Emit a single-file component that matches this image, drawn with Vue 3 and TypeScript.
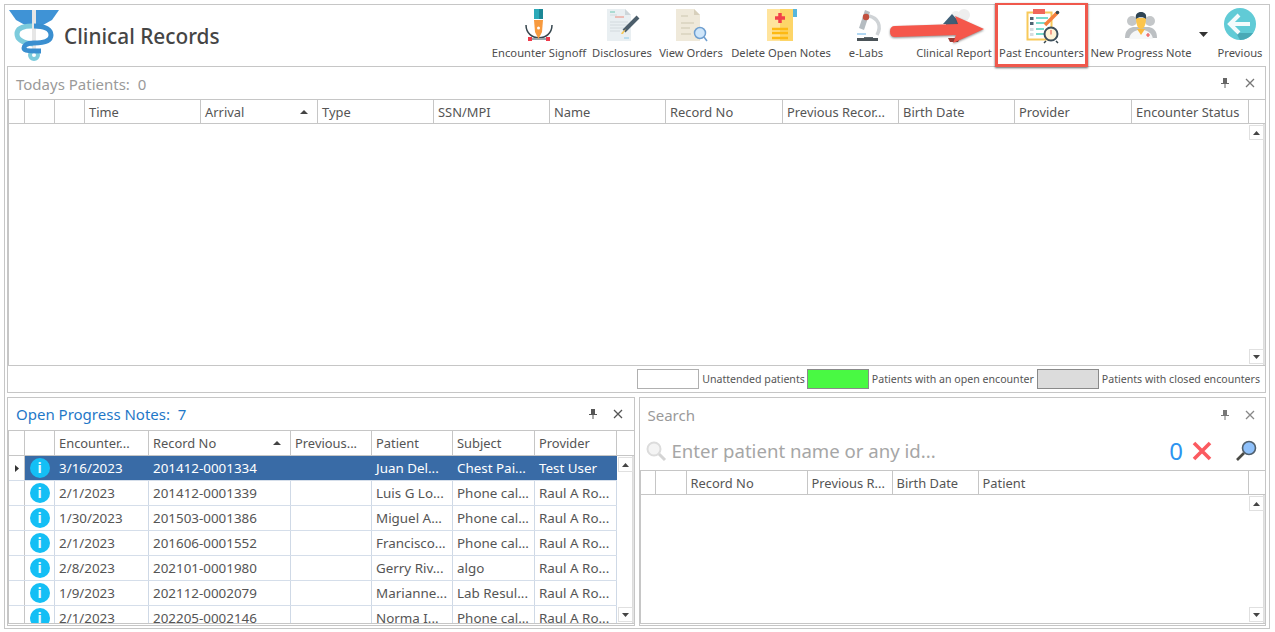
<script setup lang="ts">
const topCols: string[] = ['', '', '', 'Time', 'Arrival', 'Type', 'SSN/MPI', 'Name', 'Record No', 'Previous Recor...', 'Birth Date', 'Provider', 'Encounter Status', '']
const noteCols: string[] = ['', '', 'Encounter...', 'Record No', 'Previous...', 'Patient', 'Subject', 'Provider', '']
const searchCols: string[] = ['', '', 'Record No', 'Previous R...', 'Birth Date', 'Patient', '']

interface Note { date: string; rec: string; patient: string; subject: string; provider: string }
const notes: Note[] = [
  { date: '3/16/2023', rec: '201412-0001334', patient: 'Juan Del...', subject: 'Chest Pai...', provider: 'Test User' },
  { date: '2/1/2023', rec: '201412-0001339', patient: 'Luis G Lo...', subject: 'Phone cal...', provider: 'Raul A Ro...' },
  { date: '1/30/2023', rec: '201503-0001386', patient: 'Miguel A...', subject: 'Phone cal...', provider: 'Raul A Ro...' },
  { date: '2/1/2023', rec: '201606-0001552', patient: 'Francisco...', subject: 'Phone cal...', provider: 'Raul A Ro...' },
  { date: '2/8/2023', rec: '202101-0001980', patient: 'Gerry Riv...', subject: 'algo', provider: 'Raul A Ro...' },
  { date: '1/9/2023', rec: '202112-0002079', patient: 'Marianne...', subject: 'Lab Resul...', provider: 'Raul A Ro...' },
  { date: '2/1/2023', rec: '202205-0002146', patient: 'Norma I...', subject: 'Phone cal...', provider: 'Raul A Ro...' },
]
</script>

<template>
  <div class="page">
    <div class="frame">
      <header class="toolbar">
        <div class="brand">
          <svg class="logo" width="56" height="56" viewBox="0 0 56 56">
            <path d="M4 5 H27 V20 H20 L11 15Z" fill="#3f93d6" />
            <path d="M31 5 H54 L47 15 L38 20 H31Z" fill="#3f93d6" />
            <rect x="27" y="5" width="4" height="42" fill="#e6e6e6" />
            <path d="M27 21 C17 21 12 24 12 29 C12 35 20 38 28 39" fill="none" stroke="#7ccbdc" stroke-width="5" />
            <circle cx="29" cy="50" r="4" fill="none" stroke="#7ccbdc" stroke-width="4" />
            <path d="M29 21 C41 21 46 25 46 30 C46 37 35 38 29 38 C21 38 19 41 19 43 C19 46 26 46 36 46" fill="none" stroke="#3a8fd0" stroke-width="5" />
          </svg>
          <span class="app-title">Clinical Records</span>
        </div>
        <div class="tools">
          <div class="tool w100">
            <svg width="40" height="36" viewBox="0 0 40 36">
              <path d="M7 17 C7 34 33 34 33 17" fill="none" stroke="#37474f" stroke-width="1.5" />
              <rect x="13" y="30" width="14" height="2" fill="#9aa5aa" />
              <rect x="9" y="29" width="4" height="4" fill="#f03a4a" /><rect x="27" y="29" width="4" height="4" fill="#f03a4a" />
              <rect x="15" y="1" width="9" height="10" fill="#2ba9b8" /><rect x="20" y="1" width="4" height="10" fill="#1b8796" />
              <path d="M15 12 H24 L23 24 L19.5 31 L16 24Z" fill="#f79a3e" />
              <circle cx="19.5" cy="20" r="1.5" fill="#fff" />
            </svg>
            <span>Encounter Signoff</span>
          </div>
          <div class="tool w66">
            <svg width="40" height="36" viewBox="0 0 40 36">
              <path d="M5 1 H23 L29 7 V33 H5Z" fill="#e9eff2" /><path d="M23 1 L29 7 H23Z" fill="#cdd6da" />
              <path d="M8 4 H13" stroke="#6fc8b4" /><path d="M8 7 H15 M8 14 H26 M8 17 H26 M8 20 H22 M8 23 H18" stroke="#d3dade" />
              <path d="M13 9 H22" stroke="#ee8a7a" /><path d="M22 30 H27" stroke="#8ccbea" />
              <path d="M36 9 L22 23" stroke="#4c5e6b" stroke-width="4" /><path d="M24 21 L21 26 L19 26 L20 24Z" fill="#f7c95c" />
            </svg>
            <span>Disclosures</span>
          </div>
          <div class="tool w72">
            <svg width="40" height="36" viewBox="0 0 40 36">
              <path d="M5 1 H23 L29 7 V33 H5Z" fill="#efe9da" /><path d="M23 1 L29 7 H23Z" fill="#d8d0bc" />
              <path d="M10 8 H17 M10 15 H23 M10 20 H19 M10 26 H20" stroke="#d9d2bf" stroke-width="1.5" />
              <circle cx="29" cy="25" r="5.5" fill="#cfe6fa" stroke="#6f9fd0" stroke-width="1.5" /><path d="M33 29 L36 33" stroke="#6f9fd0" stroke-width="1.5" />
            </svg>
            <span>View Orders</span>
          </div>
          <div class="tool w108">
            <svg width="40" height="36" viewBox="0 0 40 36">
              <rect x="32" y="1" width="4" height="8" fill="#58b6dc" />
              <rect x="6" y="1" width="26" height="32" fill="#fdd568" /><rect x="6" y="1" width="13" height="32" fill="#ffe49d" />
              <path d="M19 5 V15 M14 10 H24" stroke="#f2404a" stroke-width="3.5" />
              <path d="M11 21 H27 M11 25 H27 M11 30 H27" stroke="#fdb913" stroke-width="2.5" />
            </svg>
            <span>Delete Open Notes</span>
          </div>
          <div class="tool w62">
            <svg width="40" height="36" viewBox="0 0 40 36">
              <path d="M23 8 C32 10 36 18 31 27" fill="none" stroke="#cfd3d6" stroke-width="3.5" />
              <path d="M19 2 L24 4 L18 22 L13 20Z" fill="#b5bcc1" /><circle cx="20" cy="9" r="3.2" fill="#c2503f" />
              <path d="M11 26 H20" stroke="#7dbdea" stroke-width="1.2" />
              <path d="M18 29 H27 V30 H18Z" fill="#5f6a70" /><rect x="11" y="30" width="21" height="3" fill="#4a5358" />
            </svg>
            <span>e-Labs</span>
          </div>
          <div class="tool-caret"><svg width="8" height="4" viewBox="0 0 8 4"><path d="M0 0 H8 L4 4Z" fill="#333" /></svg></div>
          <div class="tool w84">
            <svg width="40" height="36" viewBox="0 0 40 36">
              <circle cx="30" cy="7" r="6" fill="#eeeeee" /><circle cx="22" cy="8" r="5" fill="#f0f0f0" />
              <path d="M18 6 L27 16 H9Z" fill="#3f5f77" /><rect x="12" y="16" width="13" height="10" fill="#48637a" />
              <path d="M14 30 H26 L24 34 H16Z" fill="#9a3b34" />
            </svg>
            <span>Clinical Report</span>
          </div>
          <div class="tool w91">
            <svg width="40" height="36" viewBox="0 0 40 36">
              <rect x="5.5" y="4.5" width="24" height="27" fill="#fff" stroke="#f8c95a" stroke-width="2" />
              <rect x="11" y="1" width="12" height="5" fill="#f0665a" />
              <path d="M14 10 H26 M14 15 H26 M14 21 H22 M14 26 H22" stroke="#4fd0bd" stroke-width="1.5" />
              <rect x="8" y="9" width="3.5" height="3" fill="#4f6472" /><rect x="8" y="14" width="3.5" height="3" fill="#4f6472" /><rect x="8" y="20" width="3.5" height="3" fill="#d8dde0" /><rect x="8" y="25" width="3.5" height="3" fill="#d8dde0" />
              <path d="M35 5 L23 17" stroke="#f5813f" stroke-width="3.5" /><circle cx="35.5" cy="4.5" r="1.8" fill="#37474f" />
              <path d="M24 33 L22 35 M34 33 L36 35" stroke="#37474f" stroke-width="1.5" />
              <circle cx="29" cy="26" r="6.5" fill="#fff3d6" stroke="#3d4f5c" stroke-width="2" />
              <path d="M29 22 V26.5" stroke="#f0665a" stroke-width="1.2" />
            </svg>
            <span>Past Encounters</span>
          </div>
          <div class="tool w108">
            <svg width="40" height="36" viewBox="0 0 40 36">
              <circle cx="11" cy="13" r="5" fill="#c4c7c9" /><circle cx="29" cy="13" r="5" fill="#c4c7c9" />
              <path d="M4 30 C4 22 8 20 12 19 H28 C32 20 36 22 36 30Z" fill="#bcc0c3" />
              <path d="M8 31 C9 25 13 23 17 22 H23 C27 23 31 25 32 31Z" fill="#f6f7f8" />
              <path d="M16 21 H24 L20 27Z" fill="#fbb93a" />
              <path d="M15 10 C15 18 17.5 21 20 21 C22.5 21 25 18 25 10Z" fill="#fcc54c" />
              <path d="M15 11 C14 6 16.5 4 20 4 C23.5 4 26 6 25 11 C23 8.5 17 8.5 15 11Z" fill="#2f4554" />
              <path d="M27 25 V29 M25 27 H29" stroke="#ef5350" stroke-width="1.2" />
            </svg>
            <span>New Progress Note</span>
          </div>
          <div class="tool-caret wide"><svg width="9" height="5" viewBox="0 0 9 5"><path d="M0 0 H9 L4.5 5Z" fill="#333" /></svg></div>
          <div class="tool w56">
            <svg width="40" height="36" viewBox="0 0 40 36">
              <circle cx="20" cy="16" r="16" fill="#61cbd6" />
              <path d="M11 16 L20 25 L33 25 A16 16 0 0 1 20 32 Z" fill="#49a9b6" />
              <path d="M19 7 L10 16 L19 25 M11 16 H30" fill="none" stroke="#f4fbfc" stroke-width="4" />
            </svg>
            <span>Previous</span>
          </div>
        </div>
      </header>

      <section class="panel top-panel">
        <div class="panel-head h32">
          <span class="title low">Todays Patients:&nbsp; 0</span>
          <div class="panel-actions shift">
            <svg width="8" height="10" viewBox="0 0 8 10"><path d="M2 0 H6 V5 H8 V6 H4.5 V10 H3.5 V6 H0 V5 H2Z" fill="#666" /></svg>
            <svg width="10" height="10" viewBox="0 0 10 10"><path d="M1 1 L9 9 M9 1 L1 9" stroke="#777" stroke-width="1.3" /></svg>
          </div>
        </div>
        <div class="table">
          <div class="thead top-cols">
            <div v-for="(c, i) in topCols" :key="i" class="th">
              <span>{{ c }}</span><i v-if="c === 'Arrival'" class="sort"></i>
            </div>
          </div>
          <div class="tbody">
            <div class="rows"></div>
            <div class="scroll">
              <div class="sbtn"><svg width="7" height="4" viewBox="0 0 7 4"><path d="M0 4 H7 L3.5 0Z" fill="#444" /></svg></div>
              <div class="sbtn"><svg width="7" height="4" viewBox="0 0 7 4"><path d="M0 0 H7 L3.5 4Z" fill="#444" /></svg></div>
            </div>
          </div>
        </div>
        <div class="legend">
          <i class="swatch white"></i><span class="first">Unattended patients</span>
          <i class="swatch green"></i><span>Patients with an open encounter</span>
          <i class="swatch grey"></i><span>Patients with closed encounters</span>
        </div>
      </section>

      <div class="bottom">
        <section class="panel">
          <div class="panel-head h32">
            <span class="title blue">Open Progress Notes:&nbsp; 7</span>
            <div class="panel-actions">
              <svg width="8" height="10" viewBox="0 0 8 10"><path d="M2 0 H6 V5 H8 V6 H4.5 V10 H3.5 V6 H0 V5 H2Z" fill="#555" /></svg>
              <svg width="10" height="10" viewBox="0 0 10 10"><path d="M1 1 L9 9 M9 1 L1 9" stroke="#555" stroke-width="1.3" /></svg>
            </div>
          </div>
          <div class="table fill">
            <div class="thead note-cols">
              <div v-for="(c, i) in noteCols" :key="i" class="th">
                <span>{{ c }}</span><i v-if="c === 'Record No'" class="sort"></i>
              </div>
            </div>
            <div class="tbody">
              <div class="rows">
                <div v-for="(n, i) in notes" :key="n.rec" class="tr note-row" :class="{ selected: i === 0 }">
                  <div class="td rowhead"><svg v-if="i === 0" width="4" height="7" viewBox="0 0 4 7"><path d="M0 0 L4 3.5 L0 7Z" fill="#333" /></svg></div>
                  <div class="td iconcell"><span class="info">i</span></div>
                  <div class="td">{{ n.date }}</div>
                  <div class="td">{{ n.rec }}</div>
                  <div class="td"></div>
                  <div class="td">{{ n.patient }}</div>
                  <div class="td">{{ n.subject }}</div>
                  <div class="td">{{ n.provider }}</div>
                </div>
              </div>
              <div class="scroll">
                <div class="sbtn"><svg width="7" height="4" viewBox="0 0 7 4"><path d="M0 4 H7 L3.5 0Z" fill="#444" /></svg></div>
                <div class="sbtn"><svg width="7" height="4" viewBox="0 0 7 4"><path d="M0 0 H7 L3.5 4Z" fill="#444" /></svg></div>
              </div>
            </div>
          </div>
        </section>

        <section class="panel">
          <div class="panel-head h33">
            <span class="title">Search</span>
            <div class="panel-actions shift">
              <svg width="8" height="10" viewBox="0 0 8 10"><path d="M2 0 H6 V5 H8 V6 H4.5 V10 H3.5 V6 H0 V5 H2Z" fill="#777" /></svg>
              <svg width="10" height="10" viewBox="0 0 10 10"><path d="M1 1 L9 9 M9 1 L1 9" stroke="#888" stroke-width="1.3" /></svg>
            </div>
          </div>
          <div class="searchbar">
            <svg width="22" height="22" viewBox="0 0 22 22">
              <circle cx="9" cy="9" r="6.5" fill="#f4f4f4" stroke="#dcdcdc" stroke-width="2" />
              <path d="M14 14 L20 20" stroke="#d4d4d4" stroke-width="3" />
            </svg>
            <span class="placeholder">Enter patient name or any id...</span>
            <span class="count">0</span>
            <svg class="cancel" width="20" height="20" viewBox="0 0 20 20"><path d="M2 2 L18 18 M18 2 L2 18" stroke="#fb5a60" stroke-width="3.6" /></svg>
            <svg class="find" width="22" height="22" viewBox="0 0 22 22">
              <path d="M9 13 L2 20" stroke="#4a4a45" stroke-width="2.6" />
              <circle cx="14" cy="8" r="6.5" fill="#8fc1fb" stroke="#50606e" stroke-width="1.6" />
            </svg>
          </div>
          <div class="table fill">
            <div class="thead search-cols">
              <div v-for="(c, i) in searchCols" :key="i" class="th"><span>{{ c }}</span></div>
            </div>
            <div class="tbody">
              <div class="rows"></div>
              <div class="scroll">
                <div class="sbtn"><svg width="7" height="4" viewBox="0 0 7 4"><path d="M0 4 H7 L3.5 0Z" fill="#444" /></svg></div>
                <div class="sbtn"><svg width="7" height="4" viewBox="0 0 7 4"><path d="M0 0 H7 L3.5 4Z" fill="#444" /></svg></div>
              </div>
            </div>
          </div>
        </section>
      </div>
    </div>

    <div class="callout-box"></div>
    <svg class="callout-arrow" width="100" height="34" viewBox="0 0 100 34">
      <path d="M8 11 L71 9 L68 1 L97 14 L66 28 L69 20 L8 22 Q3 22 3 16.5 Q3 11 8 11Z" fill="#f5574b" />
    </svg>
  </div>
</template>

<style scoped>
.page {
  position: relative;
  width: 1275px;
  height: 632px;
  box-sizing: border-box;
  padding: 4px 5px 3px 4px;
  background: #fff;
  font-family: "Noto Sans", "Open Sans", sans-serif;
  color: #555;
  overflow: hidden;
}
.frame {
  height: 100%;
  box-sizing: border-box;
  border: 1px solid #c6c6c6;
  padding: 0 3px 2px 2px;
  display: flex;
  flex-direction: column;
}
.toolbar {
  height: 61px;
  flex: none;
  display: flex;
  justify-content: space-between;
}
.brand {
  display: flex;
  align-items: center;
}
.logo { margin-left: -2px; align-self: flex-start; flex: none; }
.app-title {
  font-size: 20.8px;
  font-weight: 500;
  color: #454545;
  margin-left: 3px;
  margin-top: 1px;
}
.tools { display: flex; margin-right: -2px; }
.tool {
  display: flex;
  flex-direction: column;
  align-items: center;
  padding-top: 3px;
  font-size: 11.2px;
  line-height: 15px;
  color: #4d4d4d;
  white-space: nowrap;
}
.tool svg { flex: none; margin-bottom: 1px; }
.w100 { width: 100px; }
.w66 { width: 66px; }
.w72 { width: 72px; }
.w108 { width: 108px; }
.w62 { width: 62px; }
.w84 { width: 84px; }
.w91 { width: 91px; }
.w56 { width: 56px; }
.tool-caret {
  width: 15px;
  padding-top: 27px;
  display: flex;
  justify-content: center;
}
.tool-caret.wide { width: 17px; }
.tool-caret svg { display: block; }

.panel {
  border: 1px solid #c6c6c6;
  display: flex;
  flex-direction: column;
  box-sizing: border-box;
  min-width: 0;
  min-height: 0;
}
.top-panel { height: 327px; flex: none; }
.panel-head {
  display: flex;
  align-items: center;
  justify-content: space-between;
  padding: 0 11px 0 8px;
  flex: none;
}
.h32 { height: 32px; }
.h33 { height: 33px; }
.title { font-size: 15px; color: #9a9a9a; }
.title.low { margin-top: 2px; }
.title.blue { color: #1f78c8; }
.panel-actions {
  display: flex;
  align-items: center;
  gap: 16px;
}
.panel-actions.shift { margin-right: -1px; }
.table {
  flex: 1;
  min-height: 0;
  display: flex;
  flex-direction: column;
  border-top: 1px solid #c6c6c6;
  border-left: 1px solid #c6c6c6;
  margin-bottom: 0;
}
.table.fill {
  border-bottom: 1px solid #c6c6c6;
  margin-bottom: 1px;
}
.thead {
  display: grid;
  height: 23px;
  flex: none;
  border-bottom: 1px solid #c6c6c6;
  box-sizing: content-box;
}
.top-cols { grid-template-columns: 16px 30px 30px 116px 117px 116px 116px 116px 117px 116px 116px 117px 117px 1fr; }
.note-cols { grid-template-columns: 16px 30px 94px 142px 81px 81px 82px 82px 1fr; height: 24px; }
.search-cols { grid-template-columns: 15px 31px 121px 85px 86px 270px 1fr; }
.th {
  border-right: 1px solid #c6c6c6;
  padding: 0 9px 0 4px;
  display: flex;
  align-items: center;
  justify-content: space-between;
  font-size: 12.9px;
  color: #555;
  white-space: nowrap;
  overflow: hidden;
}
.th:last-child { border-right: 0; }
.sort {
  width: 0;
  height: 0;
  border-left: 4px solid transparent;
  border-right: 4px solid transparent;
  border-bottom: 4px solid #444;
}
.tbody {
  flex: 1;
  min-height: 0;
  display: flex;
}
.rows {
  flex: 1;
  min-width: 0;
  overflow: hidden;
}
.scroll {
  width: 17px;
  flex: none;
  box-sizing: border-box;
  padding: 1px;
  display: flex;
  flex-direction: column;
  justify-content: space-between;
  border-right: 1px solid #e4e4e4;
  background: linear-gradient(90deg, #fff 0 15px, #dcdcdc 15px 16px);
}
.sbtn {
  width: 15px;
  height: 15px;
  box-sizing: border-box;
  border: 1px solid #e0e0e0;
  background: #fff;
  display: flex;
  align-items: center;
  justify-content: center;
}
.legend {
  height: 26px;
  flex: none;
  border-top: 1px solid #c6c6c6;
  display: flex;
  align-items: center;
  justify-content: flex-end;
  padding-right: 2px;
  font-size: 10.6px;
  color: #555;
  white-space: nowrap;
}
.legend span { margin-left: 3px; margin-right: 3px; }
.legend span.first { margin-right: 2px; }
.swatch {
  width: 62px;
  height: 20px;
  box-sizing: border-box;
  border: 1px solid #8a8a8a;
}
.swatch.white { background: #fff; border-color: #b0b0b0; }
.swatch.green { background: #49f943; }
.swatch.grey { background: #dcdcdc; }
.bottom {
  margin-top: 4px;
  flex: 1;
  min-height: 0;
  display: grid;
  grid-template-columns: 1fr 1fr;
  gap: 4px;
}
.note-row {
  display: grid;
  grid-template-columns: 16px 30px 94px 142px 81px 81px 82px 82px;
  height: 25px;
  box-sizing: border-box;
  border-bottom: 1px solid #d5deea;
  font-size: 13.4px;
  color: #555;
}
.td {
  border-right: 1px solid #cfd9e6;
  padding: 0 3px 0 4px;
  display: flex;
  align-items: center;
  white-space: nowrap;
  overflow: hidden;
}
.rowhead { border-right-color: #c6c6c6; justify-content: center; padding: 0; }
.iconcell { justify-content: center; padding: 0; }
.info {
  width: 20px;
  height: 20px;
  border-radius: 50%;
  background: #14bff5;
  color: #e9fbff;
  font-size: 14px;
  font-weight: 700;
  line-height: 20px;
  text-align: center;
  flex: none;
}
.selected .td:not(.rowhead) {
  background: #396ba6;
  color: #fff;
  border-right-color: #396ba6;
}
.searchbar {
  height: 39px;
  flex: none;
  display: flex;
  align-items: center;
  padding: 0 8px 0 5px;
}
.placeholder {
  font-size: 18.6px;
  color: #a6a6a6;
  margin-left: 5px;
  flex: 1;
}
.count {
  font-size: 24px;
  color: #2d94f0;
  line-height: 1;
}
.cancel { margin-left: 9px; }
.find { margin-left: 23px; }
.callout-box {
  position: absolute;
  left: 995px;
  top: 3px;
  width: 93px;
  height: 64px;
  box-sizing: border-box;
  border: 3px solid #f0584c;
  border-top-width: 2px;
  box-shadow: 0 1px 2px rgba(60, 60, 60, 0.8);
}
.callout-arrow {
  position: absolute;
  left: 887px;
  top: 15px;
  filter: drop-shadow(0 1px 1px rgba(60, 60, 60, 0.6));
}
</style>
